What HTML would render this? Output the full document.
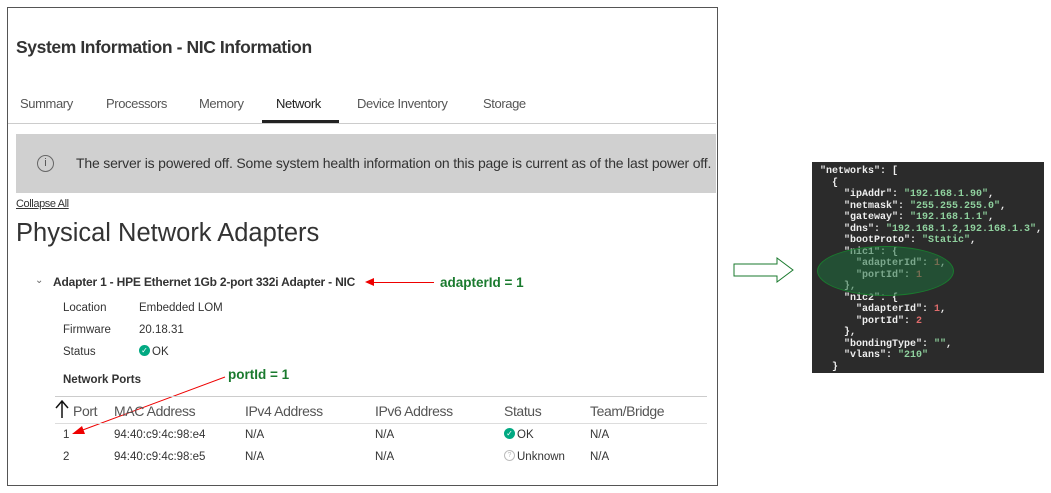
<!DOCTYPE html>
<html><head><meta charset="utf-8"><style>
body{margin:0;width:1051px;height:493px;background:#fff;position:relative;overflow:hidden;font-family:"Liberation Sans",sans-serif;color:#333}
.a{position:absolute;white-space:nowrap}
.n{letter-spacing:-0.4px}
.code{position:absolute;left:812px;top:162px;width:232px;height:211px;background:#2b2b2b;font-family:"Liberation Mono",monospace;font-size:10px;line-height:11.5px;color:#eee;font-weight:bold;padding:4px 0 0 2px;box-sizing:border-box;white-space:pre;overflow:hidden}
.s{color:#8fd19e}.r{color:#e06c6c}
</style></head><body>
<div class="a" style="left:7px;top:7px;width:709px;height:477px;border:1px solid #555"></div>
<div class="a n" style="left:16px;top:37px;font-size:17.5px;font-weight:bold;color:#333">System Information - NIC Information</div>
<div class="a n" style="left:20px;top:96px;font-size:13px;color:#555">Summary</div>
<div class="a n" style="left:106px;top:96px;font-size:13px;color:#555">Processors</div>
<div class="a n" style="left:199px;top:96px;font-size:13px;color:#555">Memory</div>
<div class="a n" style="left:276px;top:96px;font-size:13px;color:#222">Network</div>
<div class="a n" style="left:357px;top:96px;font-size:13px;color:#555">Device Inventory</div>
<div class="a n" style="left:483px;top:96px;font-size:13px;color:#555">Storage</div>
<div class="a" style="left:8px;top:123px;width:708px;height:1px;background:#ccc"></div>
<div class="a" style="left:262px;top:120px;width:77px;height:3px;background:#222"></div>
<div class="a" style="left:16px;top:134px;width:700px;height:59px;background:#d0d0d0"></div>
<div class="a" style="left:37px;top:155px;width:15px;height:15px;border:1px solid #666;border-radius:50%;font-size:11px;text-align:center;line-height:15px;color:#555">i</div>
<div class="a" style="left:76px;top:155px;font-size:14px;color:#333;letter-spacing:-0.19px">The server is powered off. Some system health information on this page is current as of the last power off.</div>
<div class="a n" style="left:16px;top:198px;font-size:11px;text-decoration:underline;color:#333">Collapse All</div>
<div class="a" style="left:16px;top:219px;font-size:25.5px;color:#333">Physical Network Adapters</div>
<div class="a" style="left:35px;top:275px;font-size:10px;color:#666">&#8964;</div>
<div class="a n" style="left:53px;top:275px;font-size:12px;font-weight:bold;color:#333;letter-spacing:-0.2px">Adapter 1 - HPE Ethernet 1Gb 2-port 332i Adapter - NIC</div>
<div class="a" style="left:372px;top:282px;width:62px;height:1px;background:#e00"></div>
<div class="a" style="left:365px;top:278px;width:0;height:0;border-top:4px solid transparent;border-bottom:4px solid transparent;border-right:9px solid #e00"></div>
<div class="a" style="left:440px;top:275px;font-size:13.5px;font-weight:bold;color:#1a7a2e">adapterId = 1</div>
<div class="a" style="left:63px;top:302px;font-size:11.5px">Location</div>
<div class="a" style="left:139px;top:302px;font-size:11.5px">Embedded LOM</div>
<div class="a" style="left:63px;top:324px;font-size:11.5px">Firmware</div>
<div class="a" style="left:139px;top:324px;font-size:11.5px">20.18.31</div>
<div class="a" style="left:63px;top:346px;font-size:11.5px">Status</div>
<div class="a" style="left:139px;top:345px;width:11px;height:11px;border-radius:50%;background:#01a982;color:#fff;font-size:8px;text-align:center;line-height:11px">✓</div>
<div class="a" style="left:152px;top:346px;font-size:11.5px">OK</div>
<div class="a" style="left:63px;top:374px;font-size:11.5px;font-weight:bold">Network Ports</div>
<div class="a" style="left:228px;top:367px;font-size:13.5px;font-weight:bold;color:#1a7a2e">portId = 1</div>
<svg class="a" style="left:0;top:0" width="720" height="493"><line x1="225" y1="377" x2="80" y2="431" stroke="#e00" stroke-width="1"/><polygon points="72,434 82,426 85,434" fill="#e00"/>
<path d="M62 418 V402 M56 408 L62 401 L68 408" fill="none" stroke="#111" stroke-width="1.5"/></svg>
<div class="a" style="left:55px;top:396px;width:652px;height:1px;background:#ccc"></div>
<div class="a" style="left:55px;top:423px;width:652px;height:1px;background:#ddd"></div>
<div class="a n" style="left:73px;top:403px;font-size:14px;color:#555">Port</div>
<div class="a n" style="left:114px;top:403px;font-size:14px;color:#555">MAC Address</div>
<div class="a n" style="left:245px;top:403px;font-size:14px;color:#555">IPv4 Address</div>
<div class="a n" style="left:375px;top:403px;font-size:14px;color:#555">IPv6 Address</div>
<div class="a n" style="left:504px;top:403px;font-size:14px;color:#555">Status</div>
<div class="a n" style="left:590px;top:403px;font-size:14px;color:#555">Team/Bridge</div>
<div class="a" style="left:63px;top:429px;font-size:11.5px">1</div>
<div class="a" style="left:114px;top:429px;font-size:11.5px">94:40:c9:4c:98:e4</div>
<div class="a" style="left:245px;top:429px;font-size:11.5px">N/A</div>
<div class="a" style="left:375px;top:429px;font-size:11.5px">N/A</div>
<div class="a" style="left:504px;top:428px;width:11px;height:11px;border-radius:50%;background:#01a982;color:#fff;font-size:8px;text-align:center;line-height:11px">✓</div>
<div class="a" style="left:517px;top:429px;font-size:11.5px">OK</div>
<div class="a" style="left:590px;top:429px;font-size:11.5px">N/A</div>
<div class="a" style="left:63px;top:451px;font-size:11.5px">2</div>
<div class="a" style="left:114px;top:451px;font-size:11.5px">94:40:c9:4c:98:e5</div>
<div class="a" style="left:245px;top:451px;font-size:11.5px">N/A</div>
<div class="a" style="left:375px;top:451px;font-size:11.5px">N/A</div>
<div class="a" style="left:504px;top:450px;width:9px;height:9px;border-radius:50%;border:1px solid #bbb;color:#bbb;font-size:7px;text-align:center;line-height:9px">?</div>
<div class="a" style="left:517px;top:451px;font-size:11.5px">Unknown</div>
<div class="a" style="left:590px;top:451px;font-size:11.5px">N/A</div>
<svg class="a" style="left:733px;top:257px" width="62" height="26"><polygon points="1,7 44,7 44,1 60,13 44,25 44,19 1,19" fill="#fff" stroke="#1a7a2e" stroke-width="1"/></svg>
<div class="code"> "networks": [
   {
     "ipAddr": <span class="s">"192.168.1.90"</span>,
     "netmask": <span class="s">"255.255.255.0"</span>,
     "gateway": <span class="s">"192.168.1.1"</span>,
     "dns": <span class="s">"192.168.1.2,192.168.1.3"</span>,
     "bootProto": <span class="s">"Static"</span>,
     "nic1": {
       "adapterId": <span class="r">1</span>,
       "portId": <span class="r">1</span>
     },
     "nic2": {
       "adapterId": <span class="r">1</span>,
       "portId": <span class="r">2</span>
     },
     "bondingType": <span class="s">""</span>,
     "vlans": <span class="s">"210"</span>
   }</div>
<div class="a" style="left:817px;top:246px;width:135px;height:48px;border:1px solid #1a7a2e;border-radius:50%;background:rgba(30,110,60,0.55)"></div>
</body></html>
